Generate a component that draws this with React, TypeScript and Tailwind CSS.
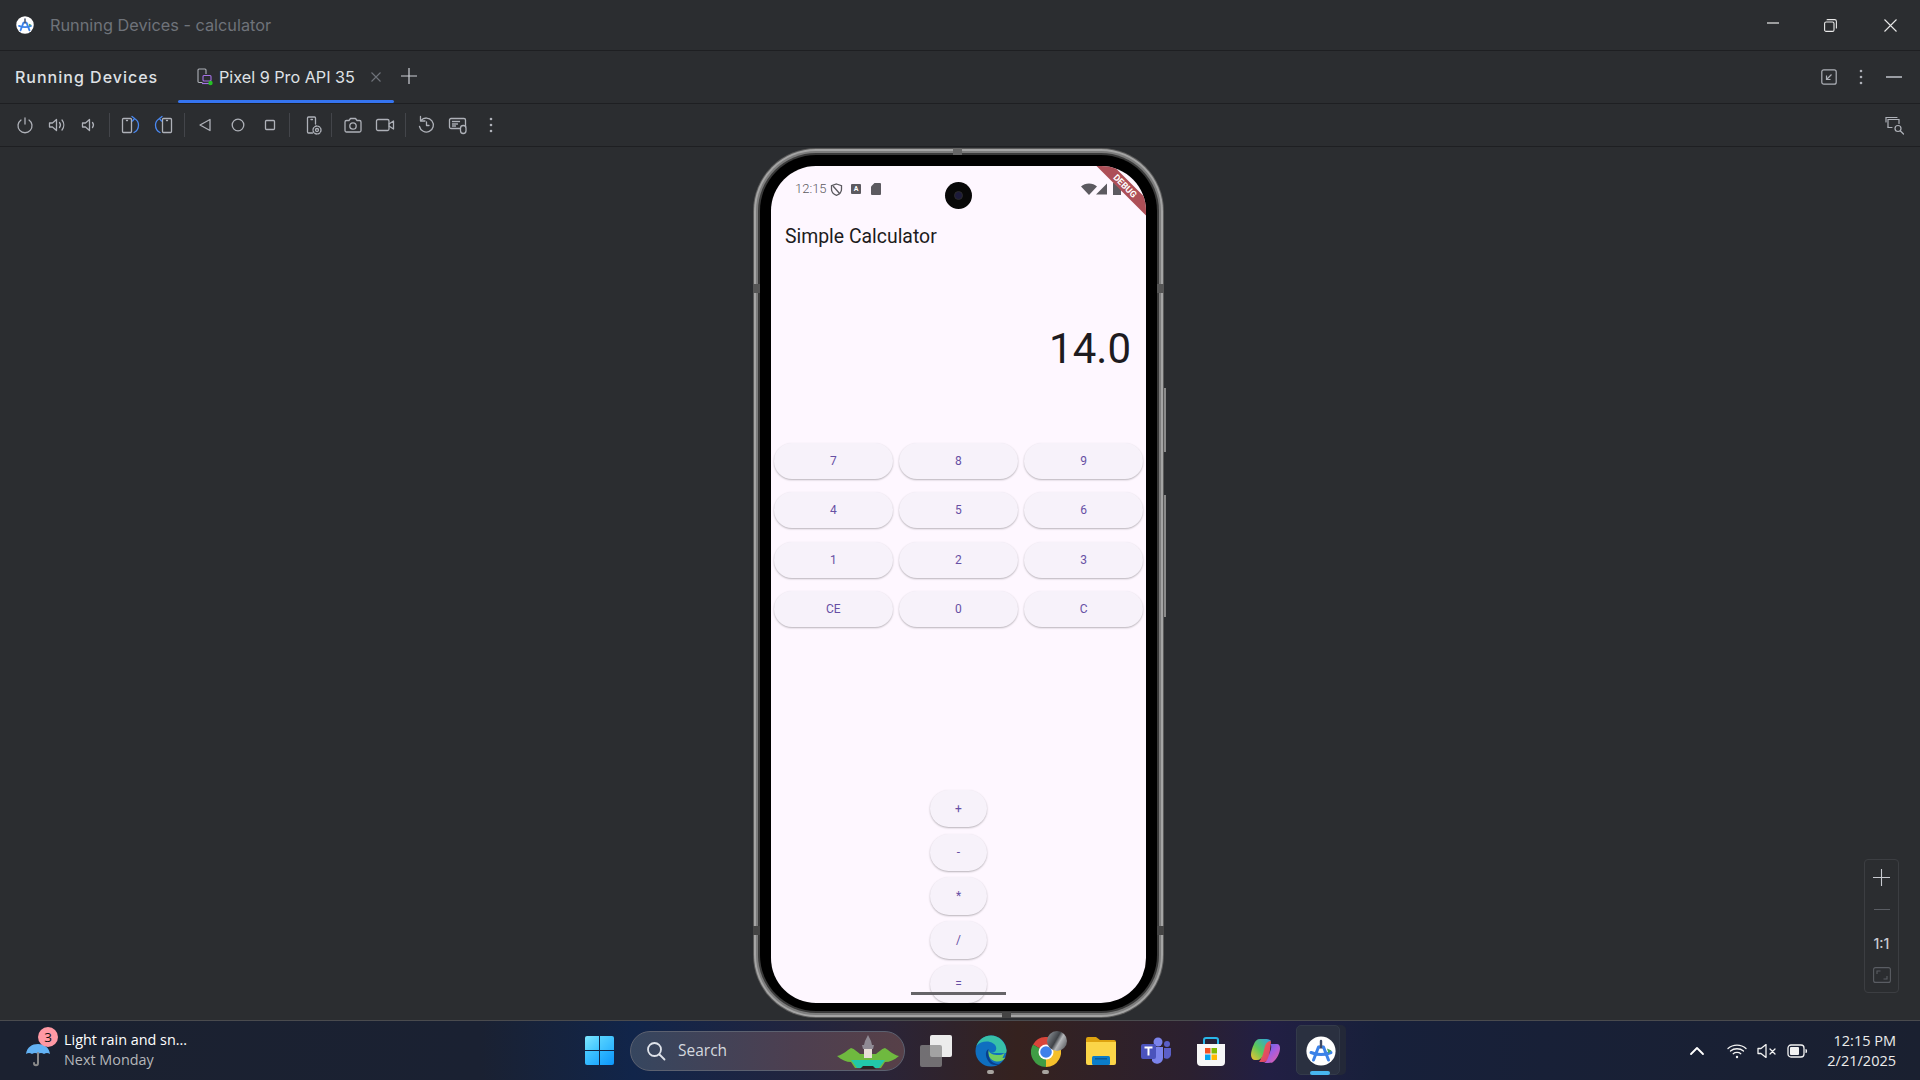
import React from "react";

const S = "#aeb1b8";

function Ic({ children, w = 20, h = 20, vb, className = "" }: { children: React.ReactNode; w?: number; h?: number; vb?: string; className?: string }) {
  return (
    <svg width={w} height={h} viewBox={vb ?? `0 0 ${w} ${h}`} fill="none" stroke={S} strokeWidth={1.3} strokeLinecap="round" strokeLinejoin="round" className={className}>
      {children}
    </svg>
  );
}

function Tool({ children, className = "" }: { children: React.ReactNode; className?: string }) {
  return <div className={`w-8 h-8 flex items-center justify-center shrink-0 ${className}`}>{children}</div>;
}

function Sep({ className = "" }: { className?: string }) {
  return <div className={`w-px h-6 bg-[#43454a] shrink-0 ${className}`} />;
}

function Logo({ size }: { size: number }) {
  return (
    <svg width={size} height={size} viewBox="0 0 30 30" fill="none">
      <circle cx="15" cy="15" r="14.6" fill="#fff" />
      <path d="M15 5v4" stroke="#3d4a66" strokeWidth="2.4" strokeLinecap="round" />
      <path d="M13 9.5h4l1.2 3h-6.4z" fill="#3d4a66" />
      <path d="M12.5 11 7.5 24M17.5 11l5 13" stroke="#3b82e8" strokeWidth="3" strokeLinecap="round" />
      <path d="M5 16.5c6 2.5 14 2.5 20 0" stroke="#3b82e8" strokeWidth="3" strokeLinecap="round" />
      <path d="M21 12.5l4.5 2-3 3z" fill="#46a35e" />
    </svg>
  );
}

function CalcBtn({ label, className = "" }: { label: string; className?: string }) {
  return (
    <div className={`bg-[#f7f2fa] rounded-full flex items-center justify-center text-[#6750a4] text-[12px] font-normal shadow-[0_1px_2px_rgba(0,0,0,0.28)] ${className}`}>
      {label}
    </div>
  );
}

function TaskSlot({ children, dot = false, className = "" }: { children: React.ReactNode; dot?: boolean; className?: string }) {
  return (
    <div className={`w-[55px] h-full relative flex items-center justify-center shrink-0 ${className}`}>
      {children}
      {dot && <div className="absolute bottom-[6px] left-[24px] w-[7px] h-[4px] rounded-full bg-[#a8a4a0]" />}
    </div>
  );
}

function PhoneScreen() {
  return (
    <div className="relative w-[375px] h-[837px] bg-[#fef7ff] rounded-[45px] overflow-hidden font-['Roboto',sans-serif] flex flex-col">
      <div className="h-[40px] shrink-0 flex items-center pl-[24px] pt-[6px] pr-[24px] text-[#5c5a60]">
        <span className="text-[13px] w-[35px] font-light">12:15</span>
        <svg width="13" height="13" viewBox="0 0 13 13" fill="none" stroke="#5c5a60" strokeWidth="1.3">
          <path d="M6.5 1 11.5 2.7v3.6c0 3-2 5-5 6-3-1-5-3-5-6V2.7z" />
          <path d="M3 3l7 8" />
        </svg>
        <div className="ml-[8px] w-[10px] h-[10px] rounded-[1px] bg-[#5c5a60] text-white text-[7px] font-bold leading-[10px] text-center">A</div>
        <svg className="ml-[10px]" width="10" height="12" viewBox="0 0 10 12" fill="#5c5a60">
          <path d="M3.5 0H9a1 1 0 0 1 1 1v10a1 1 0 0 1-1 1H1a1 1 0 0 1-1-1V3.5z" />
        </svg>
        <div className="flex-1" />
        <svg width="40" height="12" viewBox="0 0 40 12" fill="#5c5a60" className="mr-[1px]">
          <path d="M0 3.5C2 1.5 5 .5 8 .5s6 1 8 3L8 12z" />
          <path d="M26 .5V11.5H15z" />
          <rect x="32" y="0" width="8" height="12" />
        </svg>
      </div>

      <div className="h-[60px] shrink-0 flex items-center pl-[14px] pt-px text-[19.4px] text-[#1d1b20]">Simple Calculator</div>

      <div className="h-[177px] shrink-0 flex items-start justify-end pr-[15px] pt-[58px] text-[42px] leading-[50px] font-normal text-[#1d1b20]">14.0</div>

      <div className="grid grid-cols-3 gap-x-[6.5px] gap-y-[13.3px] px-[3px] shrink-0">
        {["7", "8", "9", "4", "5", "6", "1", "2", "3", "CE", "0", "C"].map((b) => (
          <CalcBtn key={b} label={b} className="h-[36px]" />
        ))}
      </div>

      <div className="flex-1 flex flex-col items-center gap-[6.3px] pt-[163px]">
        {["+", "-", "*", "/", "="].map((b) => (
          <CalcBtn key={b} label={b} className="w-[57px] h-[37.5px] shrink-0" />
        ))}
      </div>

      <div className="absolute left-[140px] top-[826px] w-[95px] h-[3px] bg-[#666468]" />
      <div className="absolute left-[173.5px] top-[15.5px] w-[27px] h-[27px] rounded-full bg-[#080808] flex items-center justify-center">
        <div className="w-[9px] h-[9px] rounded-full bg-[#1c1a3a] border border-[#2a2a2a]" />
      </div>
      <div className="absolute left-[304px] top-[14px] w-[100px] h-[12px] rotate-45 bg-[#ad4f57] text-white text-[9px] font-bold leading-[12px] text-center">DEBUG</div>
    </div>
  );
}

function Phone() {
  return (
    <div className="relative w-[411px] h-[870px] shrink-0">
      <div className="h-full rounded-[63px] bg-[#5a5a5a] p-px">
        <div className="h-full rounded-[62px] bg-[#a4a4a4] p-[2px]">
          <div className="h-full rounded-[60px] bg-[#7c7c7c] p-[2px]">
            <div className="h-full rounded-[58px] bg-[#3a3a3a] p-[2px]">
              <div className="h-full rounded-[56px] bg-black pt-[11px] px-[11px]">
                <PhoneScreen />
              </div>
            </div>
          </div>
        </div>
      </div>
      {/* antenna bands */}
      <div className="absolute left-0 top-[136px] w-[7px] h-[9px] bg-[#555]" />
      <div className="absolute right-0 top-[136px] w-[7px] h-[9px] bg-[#555]" />
      <div className="absolute left-0 top-[778px] w-[7px] h-[9px] bg-[#444]" />
      <div className="absolute right-0 top-[778px] w-[7px] h-[9px] bg-[#444]" />
      <div className="absolute left-[200px] top-0 w-[9px] h-[7px] bg-[#666]" />
      <div className="absolute left-[249px] bottom-0 w-[9px] h-[6px] bg-[#444]" />
      {/* side buttons */}
      <div className="absolute right-[-2px] top-[240px] w-[2px] h-[64px] bg-[#8a8a8a]" />
      <div className="absolute right-[-2px] top-[347px] w-[2px] h-[122px] bg-[#8a8a8a]" />
    </div>
  );
}

function Toolbar() {
  return (
    <div className="h-[43px] shrink-0 border-b border-[#1e1f22] flex items-center pl-[9px] pr-[16px]">
      <Tool>
        <Ic><path d="M10 3v6" /><path d="M6 5a7 7 0 1 0 8 0" /></Ic>
      </Tool>
      <Tool>
        <Ic><path d="M2.5 8v4h3l4 3.5v-11L5.500 8z" /><path d="M12.500 7.500a4 4 0 0 1 0 5" /><path d="M15 5a8 8 0 0 1 0 10" /></Ic>
      </Tool>
      <Tool>
        <Ic><path d="M3.500 8v4h3l4 3.500v-11L6.500 8z" /><path d="M13.500 7.500a4 4 0 0 1 0 5" /></Ic>
      </Tool>
      <Sep className="mx-[4px]" />
      <Tool>
        <Ic><rect x="2.500" y="3.500" width="9" height="14" rx="1" /><path d="M6.500 5.500h1" /><path stroke="#4a88f0" d="M14.500 3.500c2.500 1.500 4 3.500 4 6.500s-1.500 6-4.500 7.500" /><path stroke="#4a88f0" d="M12 1.500l2.500 2L12.500 6" /></Ic>
      </Tool>
      <Tool className="ml-[2px]">
        <Ic><rect x="8.500" y="3.500" width="9" height="14" rx="1" /><path d="M12.500 5.500h1" /><path stroke="#4a88f0" d="M5.500 3.500C3 5 1.500 7 1.500 10s1.500 6 4.500 7.500" /><path stroke="#4a88f0" d="M8 1.500l-2.500 2L7.500 6" /></Ic>
      </Tool>
      <Sep className="mx-[4px]" />
      <Tool>
        <Ic><path d="M15 4.500v11L5 10z" /></Ic>
      </Tool>
      <Tool className="ml-px">
        <Ic><circle cx="10" cy="10" r="5.800" /></Ic>
      </Tool>
      <Tool>
        <Ic><rect x="5.500" y="5.500" width="9" height="9" rx="1" /></Ic>
      </Tool>
      <Sep className="ml-[3px] mr-[4px]" />
      <Tool className="ml-[3px]">
        <Ic><path d="M9.500 18H5.500a1 1 0 0 1-1-1V3a1 1 0 0 1 1-1h6a1 1 0 0 1 1 1v6" /><path d="M8 4.500h1.500" /><circle cx="14" cy="15" r="1.500" /><circle cx="14" cy="15" r="4" strokeDasharray="2 1.200" /></Ic>
      </Tool>
      <Sep className="mx-[2px]" />
      <Tool className="ml-[3px]">
        <Ic><path d="M2 7a1.500 1.500 0 0 1 1.500-1.500H6l1.500-2h5l1.500 2h2.500A1.500 1.500 0 0 1 18 7v8.500a1.500 1.500 0 0 1-1.500 1.500h-13A1.500 1.500 0 0 1 2 15.500z" /><circle cx="10" cy="11" r="3.200" /></Ic>
      </Tool>
      <Tool>
        <Ic><rect x="1.500" y="4.500" width="12.500" height="11" rx="1.500" /><path d="M14 9l4.500-3v8L14 11" /></Ic>
      </Tool>
      <Sep className="mx-[4px]" />
      <Tool>
        <Ic><path d="M5 5.500a7 7 0 1 1-1.500 6" /><path d="M4.500 1.500v4.500H9" /><path d="M10.500 7v3.500H13" /></Ic>
      </Tool>
      <Tool>
        <Ic><rect x="1.500" y="3.500" width="16" height="10" rx="1.500" /><path d="M4.500 6.500h8M4.500 9h5M4.500 11h4" strokeDasharray="1 1" /><rect x="12.500" y="10.500" width="5.500" height="8" rx="2.700" fill="#2b2d30" /></Ic>
      </Tool>
      <Tool className="ml-px">
        <svg width="4" height="16" viewBox="0 0 4 16" fill={S}><circle cx="2" cy="2" r="1.300" /><circle cx="2" cy="8" r="1.300" /><circle cx="2" cy="14" r="1.300" /></svg>
      </Tool>
      <div className="flex-1" />
      <svg width="19" height="19" viewBox="0 0 19 19" fill="none" stroke={S} strokeWidth="1.200" strokeLinecap="round">
        <path d="M1 6V1.500h11" />
        <path d="M3 11V3.500h11v4" />
        <path d="M3 11v.500h4" />
        <circle cx="13" cy="12.500" r="3" />
        <path d="m15.500 15 3 3" />
      </svg>
    </div>
  );
}

function Taskbar() {
  return (
    <div className="h-[60px] shrink-0 border-t border-[#4a4b4e] flex items-center font-['Open_Sans','Noto_Sans',sans-serif] bg-[linear-gradient(90deg,#1b2130_0%,#1a2132_25%,#11254a_33%,#2a2438_46%,#35221f_53%,#2b2030_62%,#221f44_66%,#17203a_72%,#1a2030_100%)]">
      <div className="w-[572px] h-full shrink-0 flex items-center pl-[25px]">
        <div className="relative w-[39px] h-full flex items-center">
          <svg width="26" height="26" viewBox="0 0 26 26" fill="none" className="mt-[7px]">
            <path d="M1 13C2 6 7 3 13 3s11 3 12 10c-2-1.500-4-1.500-6 0-2-1.500-4-1.500-6 0-2-1.500-4-1.500-6 0-2-1.500-4-1.500-6 0z" fill="#63b3f5" />
            <path d="M13 12v10c0 3-4 3-4 0" stroke="#8a8a8a" strokeWidth="2" strokeLinecap="round" />
          </svg>
          <div className="absolute left-[13px] top-[6px] w-[20px] h-[20px] rounded-full bg-[#ff99a4] text-[#111] text-[13.500px] leading-[20px] text-center">3</div>
        </div>
        <div className="flex flex-col mb-[2px]">
          <span className="text-[14.400px] leading-[20px] text-white">Light rain and sn...</span>
          <span className="text-[14.400px] leading-[20px] text-[#b4b6ba]">Next Monday</span>
        </div>
      </div>

      <TaskSlot>
        <div className="grid grid-cols-2 gap-px w-[29px] h-[29px]">
          <div className="bg-[linear-gradient(135deg,#7ee6ff,#3cc4ff)] rounded-tl-[2px]" />
          <div className="bg-[linear-gradient(135deg,#57d3ff,#2cb4ff)] rounded-tr-[2px]" />
          <div className="bg-[linear-gradient(135deg,#49caff,#1ea8ff)] rounded-bl-[2px]" />
          <div className="bg-[linear-gradient(135deg,#2fb8ff,#0e96fa)] rounded-br-[2px]" />
        </div>
      </TaskSlot>

      <div className="ml-[3px] w-[275px] h-[40px] shrink-0 rounded-full border border-[#5c6170] bg-[linear-gradient(90deg,#36465f,#4d3f50_60%,#574048)] flex items-center pl-[15px] pr-[5px]">
        <svg width="20" height="20" viewBox="0 0 20 20" fill="none" stroke="#dfe3ea" strokeWidth="1.800" strokeLinecap="round">
          <circle cx="8.500" cy="8.500" r="6.500" />
          <path d="m13.500 13.500 5 5" />
        </svg>
        <span className="ml-[12px] text-[15.500px] text-[#d4d8df]">Search</span>
        <div className="flex-1" />
        <svg width="62" height="36" viewBox="0 0 62 36" fill="none" className="mt-[2px]">
          <path d="M0 22c6-1 10-6 14-8 4 1 6 4 9 6h16c3-2 5-5 9-6 4 2 8 7 14 8-5 4-9 6-14 6l-4 6H18l-4-6C9 28 5 26 0 22z" fill="#6fb93f" />
          <path d="M14 26h34l-6 8H20z" fill="#22c7a9" />
          <path d="M26 32h10l3 3H23z" fill="#2c2422" />
          <path d="M31 1l3 6 1 4h2l-1 4h-1v9h-8v-9h-1l-1-4h2l1-4z" fill="#8f8a94" />
          <rect x="27" y="15" width="8" height="9" fill="#e8dfd8" />
        </svg>
      </div>

      <TaskSlot className="ml-[3px]">
        <div className="relative w-[32px] h-[32px]">
          <div className="absolute right-0 top-0 w-[22px] h-[22px] rounded-[2px] bg-[#ececec]" />
          <div className="absolute left-0 bottom-0 w-[22px] h-[22px] rounded-[2px] bg-[#8a8a8a]/75" />
        </div>
      </TaskSlot>
      <TaskSlot dot>
        <svg width="32" height="32" viewBox="0 0 32 32" fill="none">
          <circle cx="16" cy="16" r="15.500" fill="#0f6fc0" />
          <path d="M31.500 16C31 7 24 .5 16 .5 9 .5 3.500 5 1.500 11 5 6.500 11 6 15 7c5 1.300 7 5 6 8-.5 2-3 3-6 3h16z" fill="#37c0a8" />
          <path d="M31.500 14c-.5 4-4 6-8 6-5 0-9-1-10-5-1.500 4 1.500 11 8 11.500 4 .3 7-1 9-4-1.500.5-2 .5-3 .5" fill="#7ad857" opacity="0.9" />
          <path d="M13.500 14c-4 2-3.500 10 2.500 15 3 1.500 7 1.500 10-.5-6 2-14-2-12.500-14.500z" fill="#083f8c" />
        </svg>
      </TaskSlot>
      <TaskSlot dot>
        <div className="relative w-[30px] h-[30px] mt-[2px]">
          <svg width="30" height="30" viewBox="0 0 30 30">
            <path d="M15 15 2 7.500A15 15 0 0 1 28 7.500z" fill="#d9453a" />
            <path d="M15 15 28 7.500A15 15 0 0 1 15 30z" fill="#f5c02c" />
            <path d="M15 15 15 30A15 15 0 0 1 2 7.500z" fill="#3f9d45" />
            <circle cx="15" cy="15" r="7.500" fill="#fff" />
            <circle cx="15" cy="15" r="5.800" fill="#3f80ea" />
          </svg>
          <div className="absolute left-[16px] top-[-6px] w-[20px] h-[20px] rounded-full bg-[linear-gradient(120deg,#9aa0a6,#3f4247_45%,#b6b8bb_60%,#44464a)]" />
        </div>
      </TaskSlot>
      <TaskSlot>
        <svg width="30" height="28" viewBox="0 0 30 28">
          <path d="M0 2a2 2 0 0 1 2-2h8l4 3h14a2 2 0 0 1 2 2v5H0z" fill="#dea30f" />
          <path d="M0 5h30v21a2 2 0 0 1-2 2H2a2 2 0 0 1-2-2z" fill="#fbd548" />
          <rect x="6" y="19" width="18" height="9" rx="1.500" fill="#0b7dc9" />
          <rect x="9" y="21" width="12" height="1.500" fill="#0a5a98" />
        </svg>
      </TaskSlot>
      <TaskSlot>
        <svg width="30" height="28" viewBox="0 0 30 28">
          <circle cx="17" cy="5" r="4.500" fill="#7b83eb" />
          <circle cx="26" cy="7" r="3" fill="#5b5fc7" />
          <path d="M11 10h11v11a6 6 0 0 1-11 3z" fill="#7b83eb" />
          <path d="M23 11h7v7a4.500 4.500 0 0 1-7 3z" fill="#5b5fc7" />
          <rect x="0" y="7" width="15" height="15" rx="2" fill="#4b53bc" />
          <path d="M3.500 10.500h8M7.500 10.500v8" stroke="#fff" strokeWidth="2" />
        </svg>
      </TaskSlot>
      <TaskSlot>
        <svg width="30" height="30" viewBox="0 0 30 30" fill="none">
          <path d="M8 8V4a2 2 0 0 1 2-2h10a2 2 0 0 1 2 2v4" stroke="#29b6e8" strokeWidth="2" />
          <path d="M1 8h28v18a4 4 0 0 1-4 4H5a4 4 0 0 1-4-4z" fill="#f7f7f7" />
          <rect x="9" y="12" width="5.500" height="5.500" fill="#f25022" />
          <rect x="15.500" y="12" width="5.500" height="5.500" fill="#7fba00" />
          <rect x="9" y="18.500" width="5.500" height="5.500" fill="#00a4ef" />
          <rect x="15.500" y="18.500" width="5.500" height="5.500" fill="#ffb900" />
        </svg>
      </TaskSlot>
      <TaskSlot>
        <svg width="29" height="26" viewBox="0 0 29 26" fill="none">
          <defs>
            <linearGradient id="cpa" x1="0" y1="1" x2="1" y2="0"><stop offset="0" stopColor="#f5c030" /><stop offset="0.45" stopColor="#5cc85a" /><stop offset="1" stopColor="#2b9fe8" /></linearGradient>
            <linearGradient id="cpb" x1="0" y1="0" x2="1" y2="1"><stop offset="0" stopColor="#3d6fe8" /><stop offset="0.5" stopColor="#a45de0" /><stop offset="1" stopColor="#ee5f9a" /></linearGradient>
            <linearGradient id="cpc" x1="0" y1="0" x2="1" y2="1"><stop offset="0" stopColor="#f06a3a" /><stop offset="1" stopColor="#d83a7a" /></linearGradient>
          </defs>
          <path d="M18 2a2 2 0 0 1 2 2l-2 16c-1 3-3 4-5 4H8c1-1 2-3 3-7l2-9c1-4 3-6 5-6z" fill="url(#cpc)" />
          <path d="M20 3c-2-2-4-2-6-2H9C6 1 4 3 3 6 1 10 0 14 0 17c0 3 2 5 4 5h2c3 0 5-2 6-6l2-8c1-3 3-5 6-5z" fill="url(#cpa)" />
          <path d="M19 6h7c2 0 3 2 3 4 0 5-3 11-7 14-1 1-3 1-5 1h-5c2 0 4-2 5-5l3-9c.5-3 0-5-1-5z" fill="url(#cpb)" />
        </svg>
      </TaskSlot>
      <TaskSlot>
        <div className="absolute left-[7px] top-[4px] w-[46px] h-[50px] rounded-[5px] bg-[#232838]" />
        <div className="absolute left-[3px] top-[4px] w-[44px] h-[50px] rounded-[5px] bg-[#2a3040] border border-[#333a4a]" />
        <div className="relative mr-[-1px]"><Logo size={30} /></div>
        <div className="absolute left-[17px] bottom-[5px] w-[20px] h-[4px] rounded-full bg-[#47b5f0]" />
      </TaskSlot>

      <div className="flex-1" />
      <div className="flex items-center pr-[24px]">
        <svg width="16" height="10" viewBox="0 0 16 10" fill="none" stroke="#fff" strokeWidth="1.800" strokeLinecap="round" strokeLinejoin="round" className="mr-[22px]">
          <path d="M2 8l6-6 6 6" />
        </svg>
        <svg width="20" height="16" viewBox="0 0 20 16" fill="none" stroke="#f2f2f2" strokeWidth="1.300" strokeLinecap="round" className="mr-[10px]">
          <path d="M1 5.500c5-4.500 13-4.500 18 0" />
          <path d="M3.500 8c3.500-3 9.500-3 13 0" />
          <path d="M6.200 10.700c2-1.700 5.600-1.700 7.600 0" />
          <circle cx="10" cy="14" r="1.200" fill="#f2f2f2" stroke="none" />
        </svg>
        <svg width="20" height="14" viewBox="0 0 20 14" fill="none" stroke="#f2f2f2" strokeWidth="1.300" strokeLinecap="round" strokeLinejoin="round" className="mr-[10px]">
          <path d="M1 4.500v5h3l5 4V.5l-5 4z" />
          <path d="M13 5l5 5M18 5l-5 5" />
        </svg>
        <svg width="21" height="14" viewBox="0 0 21 14" fill="none" className="mr-[19px]">
          <rect x="1" y="1" width="16" height="12" rx="3" stroke="#f2f2f2" strokeWidth="1.300" />
          <rect x="3" y="3" width="9" height="8" rx="1" fill="#f2f2f2" />
          <path d="M18.500 5v4a1.500 1.500 0 0 0 1.500-2 1.500 1.500 0 0 0-1.500-2z" fill="#f2f2f2" />
        </svg>
        <div className="flex flex-col items-end text-[14.500px] leading-[20px] text-[#ececec]">
          <span>12:15 PM</span>
          <span>2/21/2025</span>
        </div>
      </div>
    </div>
  );
}

export default function App() {
  return (
    <div className="w-[1920px] h-[1080px] overflow-hidden bg-[#2b2d30] flex flex-col font-['Inter',sans-serif] text-[#dfe1e5]">
      <div className="h-[51px] shrink-0 border-b border-[#1e1f22] flex items-center pl-[16px]">
        <Logo size={18} />
        <span className="ml-[16px] text-[16.300px] text-[#6f737a]">Running Devices - calculator</span>
        <div className="flex-1" />
        <svg width="12" height="2" viewBox="0 0 12 2" className="mr-[45px] mb-[4px]"><path d="M0 1h12" stroke="#e8e8e8" strokeWidth="1.200" /></svg>
        <svg width="13" height="13" viewBox="0 0 13 13" fill="none" stroke="#e8e8e8" strokeWidth="1.100" className="mr-[47px]">
          <rect x="0.600" y="3" width="9.400" height="9.400" rx="1.500" />
          <path d="M3 1.200c0-.4.300-.6.600-.6h7c1 0 1.800.8 1.800 1.800v7" />
        </svg>
        <svg width="13" height="13" viewBox="0 0 13 13" fill="none" stroke="#e8e8e8" strokeWidth="1.100" className="mr-[23px]"><path d="M.5.500l12 12M12.500.500l-12 12" /></svg>
      </div>

      <div className="h-[53px] shrink-0 border-b border-[#1e1f22] flex items-center pl-[15px]">
        <span className="text-[16px] font-medium tracking-[1px] text-[#dfe1e5] w-[163px] whitespace-nowrap">Running Devices</span>
        <div className="relative h-full w-[216px] flex items-center pl-[19px] shrink-0">
          <svg width="16" height="18" viewBox="0 0 16 18" fill="none">
            <path d="M5.500 14.500H2a1 1 0 0 1-1-1V2a1 1 0 0 1 1-1h6a1 1 0 0 1 1 1v4" stroke="#aeb1b8" strokeWidth="1.100" />
            <rect x="6" y="7.500" width="8" height="5.500" rx="1" stroke="#a571e6" strokeWidth="1.100" />
            <path d="M5 15.500h8" stroke="#a571e6" strokeWidth="1.200" />
            <circle cx="13.500" cy="15" r="2.200" fill="#25c225" />
          </svg>
          <span className="ml-[6px] text-[16.200px] text-[#dfe1e5] whitespace-nowrap">Pixel 9 Pro API 35</span>
          <svg width="10" height="10" viewBox="0 0 10 10" stroke="#6f737a" strokeWidth="1.100" className="ml-[16px]"><path d="M.5.500l9 9M9.500.500l-9 9" /></svg>
          <div className="absolute left-0 right-0 bottom-0 h-[3px] rounded-full bg-[#3574f0]" />
        </div>
        <svg width="16" height="16" viewBox="0 0 16 16" stroke="#ced0d6" strokeWidth="1.200" className="ml-[7px] mb-[2px]"><path d="M8 0v16M0 8h16" /></svg>
        <div className="flex-1" />
        <svg width="16" height="16" viewBox="0 0 16 16" fill="none" stroke={S} strokeWidth="1.200">
          <rect x="0.800" y="0.800" width="14.400" height="14.400" rx="2" />
          <path d="M10.500 5.500 5.500 10.500M5.500 6.500v4h4" />
        </svg>
        <svg width="4" height="16" viewBox="0 0 4 16" fill={S} className="ml-[22px]"><circle cx="2" cy="2" r="1.300" /><circle cx="2" cy="8" r="1.300" /><circle cx="2" cy="14" r="1.300" /></svg>
        <div className="ml-[23px] mr-[18px] w-[16px] h-[2px] bg-[#9a9da3]" />
      </div>

      <Toolbar />

      <div className="relative flex-1 flex justify-center pt-px pr-[3px] overflow-hidden">
        <Phone />
        <div className="absolute left-[1864px] top-[712px] w-[35px] h-[134px] rounded-[4px] border border-[#3c3e42] flex flex-col items-center">
          <div className="h-[34px] flex items-center justify-center">
            <svg width="17" height="17" viewBox="0 0 17 17" stroke="#c8cad0" strokeWidth="1.100"><path d="M8.500 0v17M0 8.500h17" /></svg>
          </div>
          <div className="h-[30px] flex items-center justify-center">
            <div className="w-[16px] h-px bg-[#5a5d63]" />
          </div>
          <div className="h-[36px] pt-[2px] flex items-center justify-center text-[14px] font-medium text-[#c8cad0]">1:1</div>
          <div className="h-[30px] flex items-center justify-center">
            <svg width="18" height="16" viewBox="0 0 18 16" fill="none" stroke="#5a5d63" strokeWidth="1.100">
              <rect x="0.600" y="0.600" width="16.800" height="14.800" rx="2" />
              <path d="M4 7V4h3.500M14 9v3h-3.500" />
            </svg>
          </div>
        </div>
      </div>

      <Taskbar />
    </div>
  );
}
